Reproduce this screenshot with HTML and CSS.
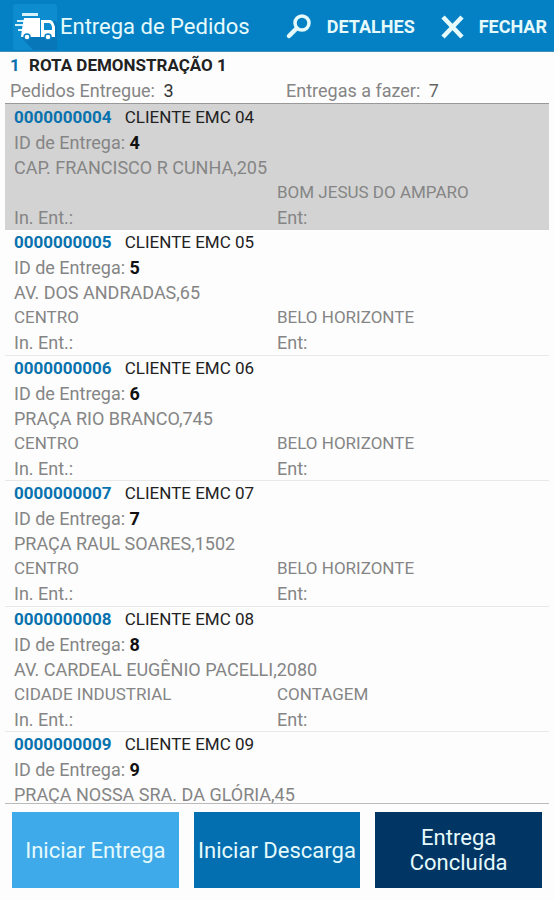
FILE: index.html
```html
<!DOCTYPE html>
<html lang="pt-BR">
<head>
  <meta charset="UTF-8" />
  <meta name="viewport" content="width=device-width, initial-scale=1.0"/>
  <title>Entrega de Pedidos</title>
  <link rel="stylesheet" href="styles.css">
</head>
<body>

  <header>
    <svg class="logo" viewBox="0 0 44 46" aria-hidden="true">
      <rect width="44" height="46" rx="3" fill="#0d8ccf"/>
      <path d="M8 33 L38 33 L41 16 L44 19 V46 H20 Z" fill="#0877b9"/>
      <path d="M9 9h16v3H9zM4 16h7v2H4zM2 20h8v2H2zM5 25h5v2H5z" fill="#d9f3fc"/>
      <path d="M11 14h16v19H8l1-8z" fill="#fff"/>
      <path fill-rule="evenodd" d="M28 16h9q3 0 5 7v10H28zm3 3v7h8v-3q-1-4-3-4z" fill="#fff"/>
      <g fill="#fff" stroke="#0b80c3" stroke-width="1.500">
        <circle cx="14" cy="33" r="3"/>
        <circle cx="35" cy="33" r="3"/>
      </g>
    </svg>
    <h1>Entrega de Pedidos</h1>
    <button class="action details">
      <svg viewBox="0 0 26 26" fill="none" stroke="#e6fafc" aria-hidden="true">
        <circle cx="17" cy="9" r="7" stroke-width="3.500"/>
        <path d="M11.500 14.500 L4 22" stroke-width="4.500" stroke-linecap="round"/>
      </svg>
      DETALHES
    </button>
    <button class="action close">
      <svg viewBox="0 0 26 26" fill="none" stroke="#e6fafc" stroke-width="4.500" aria-hidden="true">
        <path d="M4 3 L23 23 M23 3 L4 23"/>
      </svg>
      FECHAR
    </button>
  </header>

  <section class="route">
    <h2><span class="code">1</span> ROTA DEMONSTRAÇÃO 1</h2>
    <div class="columns">
      <p>Pedidos Entregue: <span class="done">3</span></p>
      <p>Entregas a fazer: <span class="todo">7</span></p>
    </div>
  </section>

  <main id="orders">
    <article class="order selected">
      <h3><span class="code">0000000004</span> CLIENTE EMC 04</h3>
      <p>ID de Entrega: <b>4</b></p>
      <p>CAP. FRANCISCO R CUNHA,205</p>
      <div class="columns place"><p></p><p>BOM JESUS DO AMPARO</p></div>
      <div class="columns"><p>In. Ent.:</p><p>Ent:</p></div>
    </article>
    <article class="order">
      <h3><span class="code">0000000005</span> CLIENTE EMC 05</h3>
      <p>ID de Entrega: <b>5</b></p>
      <p>AV. DOS ANDRADAS,65</p>
      <div class="columns place"><p>CENTRO</p><p>BELO HORIZONTE</p></div>
      <div class="columns"><p>In. Ent.:</p><p>Ent:</p></div>
    </article>
    <article class="order">
      <h3><span class="code">0000000006</span> CLIENTE EMC 06</h3>
      <p>ID de Entrega: <b>6</b></p>
      <p>PRAÇA RIO BRANCO,745</p>
      <div class="columns place"><p>CENTRO</p><p>BELO HORIZONTE</p></div>
      <div class="columns"><p>In. Ent.:</p><p>Ent:</p></div>
    </article>
    <article class="order">
      <h3><span class="code">0000000007</span> CLIENTE EMC 07</h3>
      <p>ID de Entrega: <b>7</b></p>
      <p>PRAÇA RAUL SOARES,1502</p>
      <div class="columns place"><p>CENTRO</p><p>BELO HORIZONTE</p></div>
      <div class="columns"><p>In. Ent.:</p><p>Ent:</p></div>
    </article>
    <article class="order">
      <h3><span class="code">0000000008</span> CLIENTE EMC 08</h3>
      <p>ID de Entrega: <b>8</b></p>
      <p>AV. CARDEAL EUGÊNIO PACELLI,2080</p>
      <div class="columns place"><p>CIDADE INDUSTRIAL</p><p>CONTAGEM</p></div>
      <div class="columns"><p>In. Ent.:</p><p>Ent:</p></div>
    </article>
    <article class="order">
      <h3><span class="code">0000000009</span> CLIENTE EMC 09</h3>
      <p>ID de Entrega: <b>9</b></p>
      <p>PRAÇA NOSSA SRA. DA GLÓRIA,45</p>
    </article>
  </main>

  <footer>
    <button class="start">Iniciar Entrega</button>
    <button class="unload">Iniciar Descarga</button>
    <button class="finish">Entrega Concluída</button>
  </footer>

</body>
</html>
```
FILE: styles.css
```css
* { box-sizing: border-box; margin: 0; padding: 0; font-family: Roboto, sans-serif; }

body {
  display: flex;
  flex-direction: column;
  height: 100vh;
  background: #fdfdfd;
  color: #858585;
  font-size: 18px;
  line-height: 25px;
}

button {
  border: none;
  cursor: pointer;
}

header {
  display: flex;
  align-items: center;
  flex-shrink: 0;
  height: 52px;
  padding: 2px 7px 0 13px;
  background: #0481c4;
  border-bottom: 1px solid #3f8fb8;
  color: #e6fafc;
}

.logo {
  width: 44px;
  height: 46px;
  margin-right: 3px;
}

h1 {
  font-size: 22px;
  font-weight: 400;
  margin-right: auto;
  white-space: nowrap;
}

.action {
  display: flex;
  align-items: center;
  gap: 16px;
  background: none;
  color: #e6fafc;
  font-size: 18px;
  font-weight: 700;
}

.action svg {
  width: 26px;
  height: 26px;
}

.close {
  gap: 14px;
  margin-left: 24px;
}

.route {
  padding: 1px 10px 0;
}

h2, h3 {
  font-size: 17px;
  font-weight: 400;
  color: #222;
}

h2 {
  font-weight: 700;
}

.code {
  color: #0872ae;
  font-weight: 700;
  margin-right: 5px;
}

.order .code {
  margin-right: 9px;
}

.columns {
  display: grid;
  grid-template-columns: 1fr 1fr;
}

.place {
  font-size: 17px;
}

.route .columns {
  column-gap: 18px;
}

.done, .todo {
  margin-left: 4px;
  color: #333;
}

.todo {
  color: #666;
}

#orders {
  flex: 1;
  min-height: 0;
  overflow: hidden;
  margin: 0 5px;
  border-top: 1px solid #999;
  border-bottom: 1px solid #bbb;
}

.order {
  padding: 0 9px;
  box-shadow: inset 0 -1px #e8e8e8;
}

.order:nth-child(even) {
  padding-bottom: 1px;
}

.order.selected {
  padding-top: 1px;
  background: #d3d3d3;
  box-shadow: none;
}

.order b {
  color: #111;
}

footer {
  display: grid;
  grid-template-columns: repeat(3, 1fr);
  gap: 15px;
  padding: 8px 12px 12px;
}

footer button {
  height: 76px;
  padding: 0 4px;
  color: #e6fafc;
  font-size: 22px;
  line-height: 25px;
}

.start { background: #3eaaea; }
.unload { background: #036fb1; }
.finish { background: #013664; padding: 0 30px; }
```
